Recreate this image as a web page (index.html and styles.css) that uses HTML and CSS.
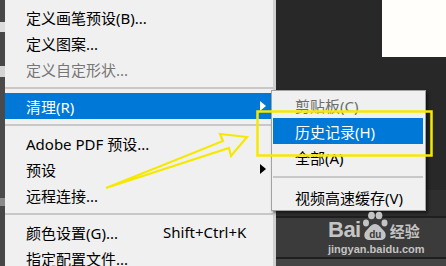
FILE: index.html
```html
<!DOCTYPE html>
<html lang="zh-CN">
<head>
    <meta charset="UTF-8"><title>清理 菜单</title>
    <link rel="stylesheet" href="styles.css">
</head>
<body>
<div class="screen">
    <div class="edge"></div>

    <div class="menu">
        <div class="item">定义画笔预设(B)...</div>
        <div class="item">定义图案...</div>
        <div class="item disabled">定义自定形状...</div>
        <div class="sep"></div>
        <div class="item active">清理(R)<span class="arrow white"></span></div>
        <div class="sep"></div>
        <div class="item">Adobe PDF 预设...</div>
        <div class="item">预设<span class="arrow"></span></div>
        <div class="item">远程连接...</div>
        <div class="sep"></div>
        <div class="item"><span class="label">颜色设置(G)...</span><span class="shortcut">Shift+Ctrl+K</span></div>
        <div class="item">指定配置文件...</div>
    </div>

    <div class="canvas">
        <div class="top">
            <div class="paper"></div>
        </div>
        <div class="band bandA"></div>
        <div class="line"></div>
        <div class="band bandB"></div>
        <div class="line"></div>
        <div class="band bandC"></div>
    </div>

    <!-- popup submenu of 清理 -->
    <div class="submenu">
        <div class="subitem disabled">剪贴板(C)</div>
        <div class="subitem active">历史记录(H)</div>
        <div class="subitem">全部(A)</div>
        <div class="subsep"></div>
        <div class="subitem">视频高速缓存(V)</div>
    </div>

    <!-- yellow annotation -->
    <svg class="marks" width="446" height="266" viewBox="0 0 446 266">
        <rect x="257.5" y="111.5" width="174" height="44" fill="none" stroke="#f6e900" stroke-width="2.5"/>
        <polygon points="106,188 223,141 220,134 247,137 231,156 229,148" fill="none" stroke="#f6e900" stroke-width="2.2" stroke-linejoin="miter"/>
    </svg>

    <div class="watermark">
        <div class="brand">
            <span class="bai">Bai</span>
            <svg class="paw" width="26" height="30" viewBox="0 0 26 30">
                <ellipse cx="4" cy="12" rx="3" ry="3.4"/>
                <ellipse cx="9.5" cy="4.5" rx="3.4" ry="3.8"/>
                <ellipse cx="17" cy="4.5" rx="3.4" ry="3.8"/>
                <ellipse cx="22.5" cy="12" rx="3" ry="3.4"/>
                <path d="M13 13 C9 13 7 17 4 20 C1 23 2 29 7 29 L19 29 C24 29 25 23 22 20 C19 17 17 13 13 13 Z"/>
                <text x="13.3" y="27" text-anchor="middle" class="du">du</text>
            </svg>
            <span class="jy">经验</span>
        </div>
        <div class="url">jingyan.baidu.com</div>
    </div>
</div>
</body>
</html>
```

FILE: styles.css
```css
html {
    font-family: "Noto Sans", "Noto Sans CJK SC", sans-serif;
    font-size: 15px;
}
body {
    margin: 0;
}
.screen {
    position: relative;
    display: flex;
    width: 446px;
    height: 266px;
    overflow: hidden;
    background-color: #282828;
}
.edge {
    width: 5px;
    flex: none;
    background: linear-gradient(#474747 0 22px, #dcdcdc 22px 32px, #474747 32px 66px, #d4d4d4 66px 77px,
        #4a4a4a 77px 198px, #8a8a8a 198px 206px, #474747 206px);
}
.menu {
    width: 268px;
    flex: none;
    padding-top: 4px;
    background-color: #f0f0f0;
    border-right: 3px solid #d0d0d0;
    color: #000;
}
.item {
    display: flex;
    align-items: center;
    height: 26px;
    padding-left: 21px;
    padding-right: 7px;
    white-space: nowrap;
}
.item.disabled {
    color: #767676;
}
.item.active {
    background-color: #0078d7;
    color: #fff;
}
.label {
    width: 137px;
    flex: none;
}
.arrow {
    margin-left: auto;
    width: 0;
    height: 0;
    border-left: 6px solid #000;
    border-top: 5.5px solid transparent;
    border-bottom: 5.5px solid transparent;
}
.arrow.white {
    border-left-color: #fff;
}
.sep {
    margin: 5px 0 4px;
    border-top: 2px solid #c8c8c8;
}
.canvas {
    flex: 1;
    display: flex;
    flex-direction: column;
}
.top {
    height: 190px;
    display: flex;
    justify-content: flex-end;
    background-color: #282828;
}
.paper {
    width: 64px;
    height: 57px;
    background-color: #fffefa;
}
.band {
    flex: none;
}
.bandA {
    height: 26px;
    background-color: #2f2f2f;
}
.line {
    height: 2px;
    background-color: #1f1f1f;
}
.bandB {
    height: 39px;
    background-color: #3b3b3b;
}
.bandC {
    flex: 1;
    background-color: #444;
}
.submenu {
    position: absolute;
    left: 271px;
    top: 90px;
    width: 150px;
    padding: 1px 2px 0 1px;
    background-color: #f0f0f0;
    border: 1px solid #a3a3a3;
    box-shadow: 2px 2px 3px rgba(0, 0, 0, 0.55);
}
.subitem {
    display: flex;
    align-items: center;
    height: 26px;
    padding-left: 22px;
    white-space: nowrap;
}
.subitem.disabled {
    color: #6d6d6d;
}
.subitem.active {
    background-color: #0078d7;
    color: #fff;
}
.subsep {
    margin: 6px 0;
    border-top: 2px solid #c8c8c8;
}
.marks {
    position: absolute;
    left: 0;
    top: 0;
}
.watermark {
    position: absolute;
    left: 328px;
    top: 211px;
    display: flex;
    flex-direction: column;
    align-items: flex-start;
    color: #c4c4c4;
    font-family: "Liberation Sans", "Noto Sans CJK SC", sans-serif;
}
.brand {
    display: flex;
    align-items: flex-end;
    height: 30px;
}
.bai {
    font-weight: bold;
    font-size: 22px;
    line-height: 22px;
    letter-spacing: -0.5px;
}
.paw {
    fill: #c4c4c4;
    margin-left: 1px;
}
.du {
    font-family: "Liberation Sans", sans-serif;
    font-weight: bold;
    font-size: 10px;
    fill: #3a3a3a;
}
.jy {
    font-family: "Noto Sans CJK SC", sans-serif;
    font-weight: bold;
    font-size: 15px;
    line-height: 20px;
    margin-left: 2px;
}
.url {
    font-size: 11px;
    font-weight: bold;
    line-height: 14px;
    margin-top: 1px;
}
```
